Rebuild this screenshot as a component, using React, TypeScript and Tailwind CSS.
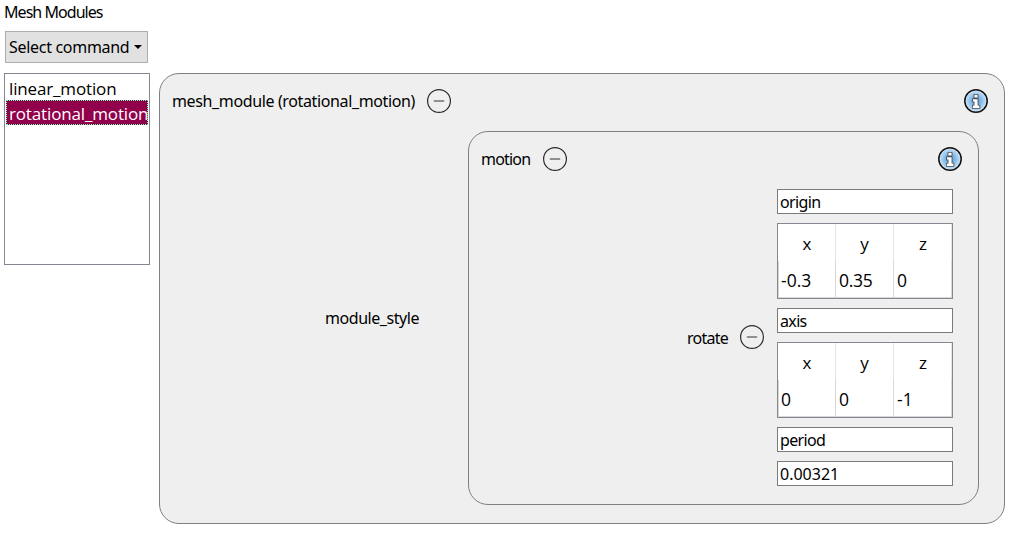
import type { ReactNode } from "react";
import clsx from "clsx";

const commands = ["linear_motion", "rotational_motion"];

type Vector = { x: string; y: string; z: string };

const origin: Vector = { x: "-0.3", y: "0.35", z: "0" };
const axis: Vector = { x: "0", y: "0", z: "-1" };

function CollapseButton() {
  return (
    <button type="button" aria-label="Collapse" className="size-6 shrink-0">
      <svg viewBox="0 0 24 24" className="block size-6" fill="none">
        <circle cx="12" cy="12" r="11.4" stroke="#2b2b2b" strokeWidth="1.2" />
        <path d="M6.8 12h10.4" stroke="#858585" strokeWidth="1.8" />
      </svg>
    </button>
  );
}

function InfoButton() {
  return (
    <button type="button" aria-label="Info" className="size-6 shrink-0">
      <svg viewBox="0 0 24 24" className="block size-6">
        <defs>
          <radialGradient id="info-fill" cx="0.5" cy="0.5" r="0.5">
            <stop offset="0" stopColor="#4f9fe0" />
            <stop offset="0.4" stopColor="#78b4e8" />
            <stop offset="1" stopColor="#d6e7f6" />
          </radialGradient>
        </defs>
        <circle
          cx="12"
          cy="12"
          r="11.2"
          fill="url(#info-fill)"
          stroke="#111"
          strokeWidth="1.5"
        />
        <path
          d="M10.4 5.8h3.2v2.7h-3.2zM9 10.2h4.6v6.4h1.8v2.3H8.8v-2.3h1.7v-4.1H9z"
          fill="#fff"
          stroke="#4a4f55"
          strokeWidth="1.8"
          strokeLinejoin="round"
          paintOrder="stroke"
        />
      </svg>
    </button>
  );
}

function Group({
  title,
  className,
  children,
}: {
  title: ReactNode;
  className?: string;
  children: ReactNode;
}) {
  return (
    <section
      className={clsx(
        "rounded-[20px] border border-[#808080] bg-[#efefef] pt-[15px] pl-3",
        className
      )}
    >
      <header className="flex h-6 items-center gap-3 pr-4">
        {title}
        <CollapseButton />
        <span className="flex-1" />
        <InfoButton />
      </header>
      {children}
    </section>
  );
}

function TextField({ value, className }: { value: string; className?: string }) {
  return (
    <div
      className={clsx(
        "h-[25px] border border-[#7a7a7a] bg-white pl-0.5 leading-6",
        className
      )}
    >
      {value}
    </div>
  );
}

function VectorTable({ value }: { value: Vector }) {
  return (
    <table className="h-[76px] w-full table-fixed border-separate border-spacing-0 border border-[#828790] bg-white font-['Open_Sans',sans-serif] text-[17px]">
      <thead>
        <tr className="h-[37px]">
          <th className="border-r border-[#e5e5e5] p-0 pt-0.5 pl-px font-normal">
            x
          </th>
          <th className="border-r border-[#e5e5e5] p-0 pt-0.5 font-normal">y</th>
          <th className="border-r border-[#e5e5e5] p-0 pt-0.5 pl-px font-normal">
            z
          </th>
        </tr>
      </thead>
      <tbody>
        <tr className="h-[37px] text-[17.5px]">
          <td className="border-r border-b border-l border-[#d8d8d8] p-0 pt-[3px] pl-0.5">
            {value.x}
          </td>
          <td className="border-r border-b border-[#d8d8d8] p-0 pt-[3px] pl-[3px] tracking-[-0.3px]">
            {value.y}
          </td>
          <td className="border-r border-b border-[#d8d8d8] p-0 pt-[3px] pl-[3px]">
            {value.z}
          </td>
        </tr>
      </tbody>
    </table>
  );
}

export default function App() {
  return (
    <main className="h-[533px] w-[1010px] overflow-hidden bg-white pl-1 font-['Noto_Sans',sans-serif] text-base text-black">
      <h1 className="h-[31px] leading-6 tracking-[-0.95px]">Mesh Modules</h1>
      <button
        type="button"
        className="ml-px flex h-8 w-[143px] items-center border border-[#adadad] bg-[#e1e1e1] pl-[3px] tracking-[-0.3px] whitespace-nowrap"
      >
        <span className="w-[125px] text-left">Select command</span>
        <svg viewBox="0 0 8 4" className="h-1 w-2 shrink-0">
          <path d="M0 0h8L4 4z" />
        </svg>
      </button>

      <div className="mt-2.5 flex items-start gap-[9px]">
        <ul className="h-48 w-[146px] shrink-0 border border-[#828790] bg-white p-px font-['Open_Sans',sans-serif] text-[17px]">
          {commands.map((name) => (
            <li
              key={name}
              className={clsx(
                "h-[25px] overflow-hidden pl-[3px] leading-7 tracking-[-0.15px] whitespace-nowrap",
                name === "rotational_motion" &&
                  "bg-[#91004b] text-white outline-1 -outline-offset-1 outline-dotted outline-[#6effb4]"
              )}
            >
              {name}
            </li>
          ))}
        </ul>

        <Group
          className="h-[451px] w-[846px]"
          title={
            <span className="w-[243px] tracking-[-0.37px] whitespace-nowrap">
              mesh_module (rotational_motion)
            </span>
          }
        >
          <div className="mt-[18px] flex items-center justify-end pr-[25px]">
            <span className="mr-12 w-[95px] tracking-[-0.45px]">
              module_style
            </span>
            <Group
              className="h-[374px] w-[511px]"
              title={<span className="w-[50px] tracking-[-0.8px]">motion</span>}
            >
              <div className="mt-[18px] flex items-center justify-end pr-[25px]">
                <div className="flex items-center pb-px">
                  <span className="w-[53px] pt-px tracking-[-0.75px]">
                    rotate
                  </span>
                  <CollapseButton />
                </div>
                <div className="ml-[13px] flex w-44 flex-col gap-[9px]">
                  <TextField value="origin" className="tracking-[-0.65px]" />
                  <VectorTable value={origin} />
                  <TextField value="axis" className="tracking-[-0.65px]" />
                  <VectorTable value={axis} />
                  <TextField value="period" className="tracking-[-0.65px]" />
                  <TextField value="0.00321" />
                </div>
              </div>
            </Group>
          </div>
        </Group>
      </div>
    </main>
  );
}
